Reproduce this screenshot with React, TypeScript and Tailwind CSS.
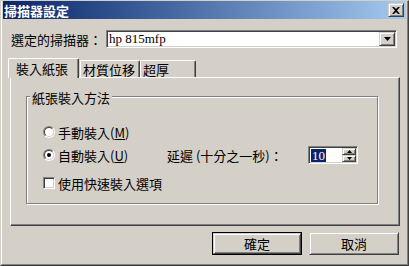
const raised =
  "border border-t-[#d4d0c8] border-l-[#d4d0c8] border-r-[#404040] border-b-[#404040] shadow-[inset_1px_1px_0_#ffffff,inset_-1px_-1px_0_#808080]";
const sunken =
  "border border-t-[#808080] border-l-[#808080] border-r-white border-b-white shadow-[inset_1px_1px_0_#404040,inset_-1px_-1px_0_#d4d0c8]";

function Radio({ checked }: { checked?: boolean }) {
  return (
    <span className="w-[12px] h-[12px] rounded-full border border-t-[#808080] border-l-[#808080] border-r-white border-b-white flex">
      <span className="flex-1 rounded-full bg-white border border-t-[#404040] border-l-[#404040] border-r-[#d4d0c8] border-b-[#d4d0c8] flex items-center justify-center">
        {checked && <span className="w-[4px] h-[4px] rounded-full bg-black" />}
      </span>
    </span>
  );
}

function Arrow({ up }: { up?: boolean }) {
  return (
    <svg width="5" height="3" viewBox="0 0 5 3">
      <path d={up ? "M2.5 0 L5 3 H0 Z" : "M0 0 H5 L2.5 3 Z"} fill="#000" />
    </svg>
  );
}

export default function App() {
  return (
    <div className="w-[409px] h-[266px] bg-[#d4d0c8] border border-l-[#d4d0c8] border-t-[#d4d0c8] border-r-[#404040] border-b-[#404040] font-['Noto_Sans_CJK_TC','Liberation_Sans',sans-serif] text-black">
      <div className="h-full flex flex-col border-l border-r border-b border-l-white border-r-[#808080] border-b-[#808080] px-px pb-px">
        {/* title bar */}
        <div className="h-[18px] shrink-0 flex items-center justify-between bg-linear-to-r from-[#0a246a] to-[#a6caf0] pl-[1px] pr-[2px]">
          <span className="text-white font-bold text-[13px] leading-none">掃描器設定</span>
          <button className={`w-[16px] h-[14px] bg-[#d4d0c8] flex items-center justify-center ${raised}`}>
            <svg width="8" height="7" viewBox="0 0 8 7">
              <path d="M0 0 H2 L4 2 L6 0 H8 L5 3.5 L8 7 H6 L4 5 L2 7 H0 L3 3.5 Z" fill="#000" />
            </svg>
          </button>
        </div>

        <div className="flex-1 flex flex-col text-[13px]">
          {/* scanner select */}
          <div className="mt-[11px] h-[18px] flex items-center justify-between pl-[8px] pr-[9px]">
            <span className="leading-none">選定的掃描器：</span>
            <div className={`w-[291px] h-full flex bg-white p-px ${sunken}`}>
              <span className="flex-1 pl-[1px] font-['Liberation_Serif',serif] text-[13px] leading-[14px]">hp 815mfp</span>
              <div className={`w-[16px] h-full bg-[#d4d0c8] flex items-center justify-center ${raised}`}>
                <svg width="7" height="4" viewBox="0 0 7 4">
                  <path d="M0 0 H7 L3.5 4 Z" fill="#000" />
                </svg>
              </div>
            </div>
          </div>

          {/* tabs */}
          <div className="mt-[10px] h-[19px] flex items-end pl-[5px] relative z-10">
            <div className="w-[71px] h-[20px] -mb-px bg-[#d4d0c8] border-l border-t border-r border-l-white border-t-white border-r-[#404040] shadow-[inset_-1px_0_0_#808080] rounded-t-[2px] pl-[7px] flex items-center leading-none">
              裝入紙張
            </div>
            <div className="ml-px w-[60px] h-[17px] bg-[#d4d0c8] border-l border-t border-r border-l-white border-t-white border-r-[#404040] shadow-[inset_-1px_0_0_#808080] rounded-t-[2px] pl-[2px] flex items-center leading-none">
              材質位移
            </div>
            <div className="w-[56px] h-[17px] bg-[#d4d0c8] border-l border-t border-r border-l-white border-t-white border-r-[#404040] shadow-[inset_-1px_0_0_#808080] rounded-t-[2px] pl-[2px] flex items-center leading-none">
              超厚
            </div>
          </div>

          {/* panel */}
          <div className="ml-[7px] mr-[6px] h-[149px] border border-t-white border-l-white border-r-[#404040] border-b-[#404040] shadow-[inset_-1px_-1px_0_#808080] pl-[15px]">
            <div className="relative mt-[18px] w-[352px] h-[108px] border border-[#808080] shadow-[inset_1px_1px_0_#ffffff,1px_1px_0_#ffffff] pl-[16px] flex flex-col">
              <span className="absolute left-[3px] top-[-7px] px-[2px] bg-[#d4d0c8] leading-[15px]">紙張裝入方法</span>

              <div className="mt-[27px] h-[16px] flex items-center gap-[3px] leading-none">
                <Radio />
                <span>
                  手動裝入(<span className="underline">M</span>)
                </span>
              </div>

              <div className="mt-[6px] h-[18px] flex items-center leading-none">
                <div className="w-[124px] flex items-center gap-[3px]">
                  <Radio checked />
                  <span>
                    自動裝入(<span className="underline">U</span>)
                  </span>
                </div>
                <span className="w-[141px]">延遲 (十分之一秒)：</span>
                <div className={`w-[50px] h-full bg-white p-px flex ${sunken}`}>
                  <div className="flex-1 flex items-center">
                    <span className="ml-px h-[13px] px-px bg-[#0a246a] text-white font-['Liberation_Serif',serif] text-[13px] leading-[13px]">
                      10
                    </span>
                  </div>
                  <div className="w-[14px] flex flex-col">
                    <div className={`flex-1 bg-[#d4d0c8] flex items-center justify-center ${raised}`}>
                      <Arrow up />
                    </div>
                    <div className={`flex-1 bg-[#d4d0c8] flex items-center justify-center ${raised}`}>
                      <Arrow />
                    </div>
                  </div>
                </div>
              </div>

              <div className="mt-[11px] h-[16px] flex items-center gap-[3px] leading-none">
                <span className={`w-[12px] h-[12px] bg-white ${sunken}`} />
                <span>使用快速裝入選項</span>
              </div>
            </div>
          </div>

          {/* buttons */}
          <div className="mt-[6px] flex justify-end gap-[7px] pr-[7px]">
            <div className="w-[90px] h-[23px] border border-black flex">
              <button className={`flex-1 bg-[#d4d0c8] flex items-center justify-center leading-none ${raised}`}>確定</button>
            </div>
            <button className={`w-[90px] h-[23px] bg-[#d4d0c8] flex items-center justify-center leading-none ${raised}`}>取消</button>
          </div>
        </div>
      </div>
    </div>
  );
}
